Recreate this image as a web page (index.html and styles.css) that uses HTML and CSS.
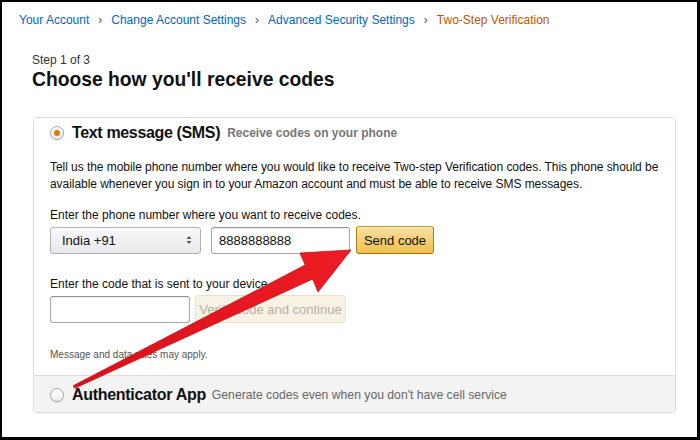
FILE: index.html
```html
<!DOCTYPE html>
<html lang="en">

<head>
  <meta charset="UTF-8" />
  <meta name="viewport" content="width=device-width, initial-scale=1.0" />
  <title>Two-Step Verification</title>
  <link rel="stylesheet" href="styles.css">
</head>

<body>
  <div class="page">
    <!-- Breadcrumb -->
    <div class="breadcrumb">
      <a href="#">Your Account</a>
      <span class="sep">›</span>
      <a href="#">Change Account Settings</a>
      <span class="sep">›</span>
      <a href="#">Advanced Security Settings</a>
      <span class="sep">›</span>
      <span class="current">Two-Step Verification</span>
    </div>

    <div class="content">
      <div class="step">Step 1 of 3</div>
      <h1>Choose how you'll receive codes</h1>

      <div class="optionsBox">
        <!-- SMS option (selected) -->
        <div class="option optionActive">
          <div class="optionHead">
            <span class="radio radioOn"></span>
            <span class="optionTitle">Text message (SMS)</span>
            <span class="optionHint">Receive codes on your phone</span>
          </div>

          <p class="intro">Tell us the mobile phone number where you would like to receive Two-step Verification codes. This phone should be available whenever you sign in to your Amazon account and must be able to receive SMS messages.</p>

          <label class="fieldLabel">Enter the phone number where you want to receive codes.</label>
          <div class="row">
            <div class="select">
              <span>India +91</span>
              <svg class="selectArrows" width="6" height="10" viewBox="0 0 6 10">
                <path d="M3 1 L5.5 4 H0.5 Z M3 9 L5.5 6 H0.5 Z" fill="#555" />
              </svg>
            </div>
            <input class="textInput phoneInput" type="text" value="8888888888" />
            <button class="btnGold">Send code</button>
          </div>

          <label class="fieldLabel codeLabel">Enter the code that is sent to your device.</label>
          <div class="row">
            <input class="textInput codeInput" type="text" />
            <button class="btnDisabled" disabled>Verify code and continue</button>
          </div>

          <div class="smallPrint">Message and data rates may apply.</div>
        </div>

        <!-- Authenticator option -->
        <div class="option optionIdle">
          <span class="radio"></span>
          <span class="optionTitle appTitle">Authenticator App</span>
          <span class="optionHint appHint">Generate codes even when you don't have cell service</span>
        </div>
      </div>
    </div>
  </div>

  <!-- red annotation arrow drawn over the screenshot -->
  <svg class="arrow" width="700" height="440" viewBox="0 0 700 440">
    <defs>
      <linearGradient id="arrowFill" x1="0" y1="1" x2="1" y2="0">
        <stop offset="0" stop-color="#d8101a" />
        <stop offset="1" stop-color="#ee1c24" />
      </linearGradient>
    </defs>
    <polygon points="73.3,385.7 305.2,265 300,253 351,250 318,292 312.8,279 74.7,388.3"
      fill="url(#arrowFill)" stroke="#c40d15" stroke-width="0.8" stroke-linejoin="round" />
  </svg>
</body>

</html>
```

FILE: styles.css
```css
body {
  margin: 0;
  background-color: #000;
  font-family: "Liberation Sans", Arial, sans-serif;
  color: #111;
  position: relative;
  width: 700px;
  height: 440px;
  overflow: hidden;
}

.page {
  margin: 2px 3px 3px 2px;
  height: 435px;
  background-color: #fff;
}

.breadcrumb {
  padding: 10px 17px 0;
  font-size: 12px;
  line-height: 16px;
  display: flex;
  gap: 8px;
}

.breadcrumb a {
  color: #0066c0;
  text-decoration: none;
}

.breadcrumb .sep {
  color: #555;
  padding: 0 1px;
}

.breadcrumb .current {
  color: #c45500;
}

.content {
  padding: 24px 21px 0 30px;
}

.step {
  font-size: 12px;
  line-height: 16px;
  color: #333;
}

h1 {
  margin: 0;
  font-size: 19.3px;
  line-height: 24px;
  font-weight: bold;
  color: #111;
}

.optionsBox {
  margin-top: 25px;
  margin-left: 1px;
  border: 1px solid #ddd;
  border-radius: 4px;
  overflow: hidden;
  box-shadow: 0 1px 1px rgba(0, 0, 0, 0.05);
}

.option {
  padding: 0 12px 0 16px;
}

.optionActive {
  padding-top: 4px;
  padding-bottom: 14px;
  background-color: #fff;
}

.optionIdle {
  border-top: 1px solid #ddd;
  background-color: #f3f3f3;
  height: 37px;
  padding-top: 2px;
  box-sizing: border-box;
  display: flex;
  align-items: center;
}

.optionHead {
  display: flex;
  align-items: center;
  height: 22px;
}

.radio {
  width: 12px;
  height: 12px;
  border: 1px solid #a6a6a6;
  border-radius: 50%;
  background: linear-gradient(#fff, #eee);
  box-shadow: 0 1px 1px rgba(0, 0, 0, 0.1);
  display: inline-flex;
  align-items: center;
  justify-content: center;
  margin-right: 8px;
  flex-shrink: 0;
}

.radioOn::after {
  content: "";
  width: 6px;
  height: 6px;
  border-radius: 50%;
  background-color: #e77600;
}

.optionTitle {
  font-size: 16px;
  letter-spacing: -0.35px;
  font-weight: bold;
  color: #111;
}

.optionHint {
  margin-left: 7px;
  font-size: 12px;
  font-weight: bold;
  color: #767676;
}

.appTitle {
  letter-spacing: -0.3px;
}

.appHint {
  font-weight: normal;
  font-size: 12.2px;
  color: #666;
  margin-left: 6px;
}

.intro {
  margin: 15px 0 0;
  font-size: 12px;
  letter-spacing: -0.05px;
  line-height: 17px;
  color: #111;
}

.fieldLabel {
  display: block;
  margin-top: 14px;
  font-size: 12px;
  line-height: 16px;
  color: #111;
}

.codeLabel {
  margin-top: 22px;
}

.row {
  display: flex;
  align-items: center;
  margin-top: 3px;
  height: 28px;
}

.select {
  width: 151px;
  height: 27px;
  box-sizing: border-box;
  border: 1px solid #adb1b8;
  border-radius: 3px;
  background: linear-gradient(#f7f8fa, #e7e9ec);
  box-shadow: 0 1px 0 rgba(255, 255, 255, 0.6) inset;
  display: flex;
  align-items: center;
  justify-content: space-between;
  padding: 0 8px 0 11px;
  font-size: 13px;
}

.textInput {
  height: 27px;
  box-sizing: border-box;
  border: 1px solid #a6a6a6;
  border-top-color: #949494;
  border-radius: 3px;
  box-shadow: 0 1px 0 rgba(255, 255, 255, 0.5), 0 1px 0 rgba(0, 0, 0, 0.07) inset;
  padding: 0 7px;
  font-family: inherit;
  font-size: 13px;
  color: #111;
  outline: none;
}

.phoneInput {
  width: 139px;
  margin-left: 10px;
}

.codeInput {
  width: 140px;
}

.btnGold {
  margin-left: 6px;
  width: 78px;
  height: 28px;
  border: 1px solid #a88734;
  border-color: #c89411 #b0820f #99710d;
  border-radius: 3px;
  background: linear-gradient(#f7dfa5, #f0c14b);
  box-shadow: 0 1px 0 rgba(255, 255, 255, 0.4) inset;
  font-family: inherit;
  font-size: 13px;
  color: #111;
  padding: 0;
  cursor: pointer;
}

.btnDisabled {
  margin-left: 5px;
  width: 151px;
  height: 28px;
  border: 1px solid #ebe2cc;
  border-radius: 3px;
  background-color: #f8f2e4;
  font-family: inherit;
  font-size: 13px;
  color: #b5b0a6;
  padding: 0;
}

.smallPrint {
  margin-top: 26px;
  font-size: 10px;
  line-height: 12px;
  color: #555;
}

.arrow {
  position: absolute;
  top: 0;
  left: 0;
  pointer-events: none;
}
```
